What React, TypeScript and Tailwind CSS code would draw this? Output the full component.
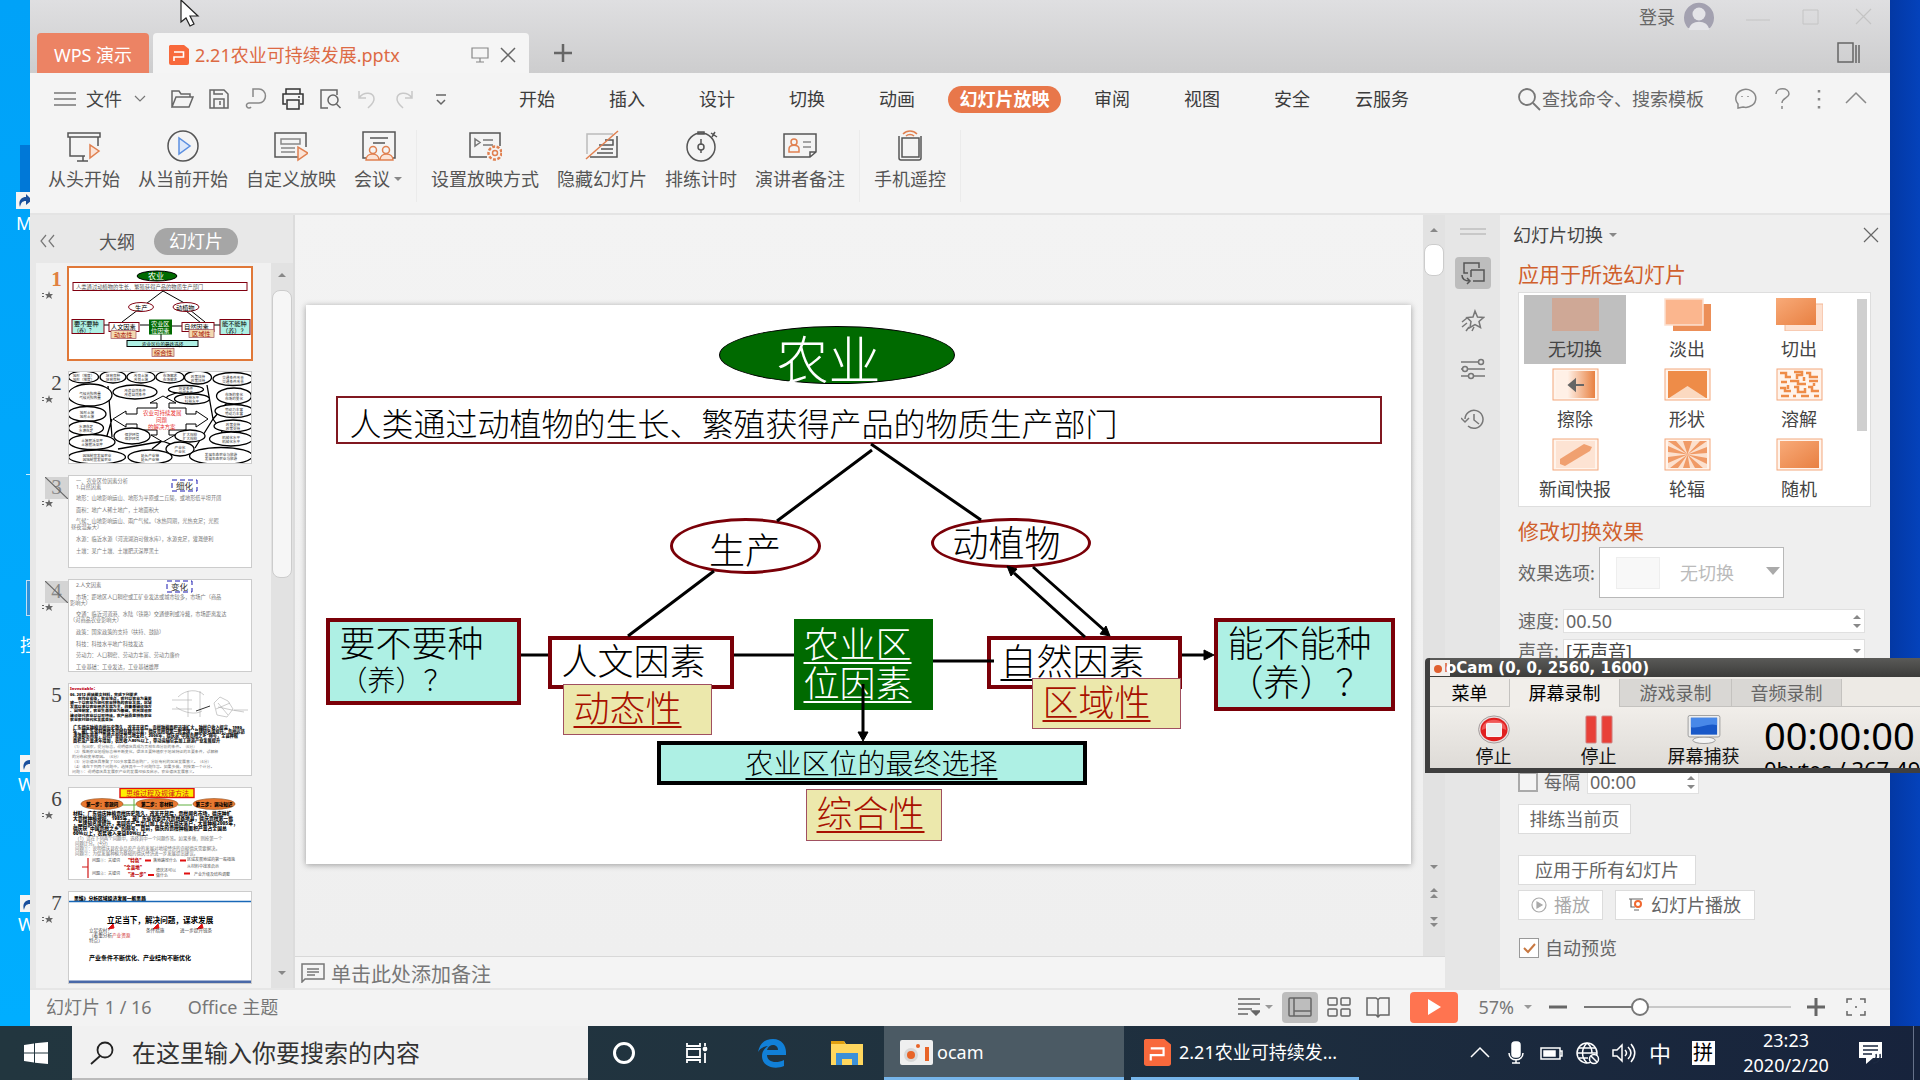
import { ReactNode, useState } from 'react';
import clsx from 'clsx';

// ---------- icons ----------

type IconProps = { w?: number; h?: number; sw?: number; className?: string; children: ReactNode };

const Icon = ({ w = 24, h = 24, sw = 1.5, className, children }: IconProps) => (
  <svg width={w} height={h} viewBox={`0 0 ${w} ${h}`} fill="none" stroke="currentColor" strokeWidth={sw} className={clsx('shrink-0', className)}>
    {children}
  </svg>
);

const Caret = ({ up, className }: { up?: boolean; className?: string }) => (
  <svg width="10" height="6" viewBox="0 0 10 6" className={clsx('shrink-0', className)}>
    <path d={up ? 'M1 5h8L5 1z' : 'M1 1h8L5 5z'} fill="currentColor" />
  </svg>
);

const WpsLogo = ({ w, h }: { w: number; h: number }) => (
  <svg width={w} height={h} viewBox="0 0 20 20" preserveAspectRatio="none" className="shrink-0">
    <path d="M1 0h14l5 4v14a2 2 0 0 1-2 2H2a2 2 0 0 1-2-2V1z" fill="#f8693c" />
    <path d="M5 7h9.500v5H5v4" fill="none" stroke="#fff" strokeWidth="1.6" />
  </svg>
);

const quickIcons = [
  {
    label: '打开',
    tone: 'text-[#666]',
    art: <path d="M2 20V4h7l2 3h9v3M2 20 6 10h17l-4 10z" />,
  },
  {
    label: '保存',
    tone: 'text-[#666]',
    art: (
      <>
        <path d="M3 3h14l4 4v14H3z" />
        <path d="M7 3v4h9M7 21V12h10v9M13 14v4" />
      </>
    ),
  },
  {
    label: '输出为PDF',
    tone: 'text-[#888]',
    art: <path d="M9 10V2h6a6 6.500 0 0 1 0 14H5a2.500 2.500 0 1 0 2 4" />,
  },
  {
    label: '打印',
    tone: 'text-[#333]',
    art: (
      <>
        <path d="M5 7V2h14v5M5 17H2V7h20v10h-3" />
        <path d="M6 13h12v9H6zM17 10h2" />
      </>
    ),
  },
  {
    label: '打印预览',
    tone: 'text-[#666]',
    art: (
      <>
        <path d="M10 21H3V3h16v5" />
        <circle cx="15" cy="13" r="5" />
        <path d="m18.500 17 4 4" />
      </>
    ),
  },
  { label: '撤销', tone: 'text-[#c8c8c8]', art: <path d="M4 4v7h7M4 11c5-7 15-6 15 1 0 4-3 6-6 9" /> },
  { label: '恢复', tone: 'text-[#c8c8c8]', art: <path d="M20 4v7h-7M20 11C15 4 5 5 5 12c0 4 3 6 6 9" /> },
  { label: '自定义快速访问工具栏', tone: 'text-[#666]', art: <path d="M7 8h10M8 13l4 4 4-4" /> },
];

const OR = '#e08050';

const ribbonGroups = [
  [
    {
      label: '从头开始',
      art: (
        <>
          <path d="M1 3h32v4H1zM3 7v19h15M16 26v5M10 31h11M31 7v9" />
          <path d="M23 15v13l9-7z" stroke={OR} fill="#fbe3d6" />
        </>
      ),
    },
    {
      label: '从当前开始',
      art: (
        <>
          <circle cx="17" cy="16" r="15" />
          <path d="M13 8v16l11-8z" stroke="#5b8fe0" fill="#dce8fa" />
        </>
      ),
    },
    {
      label: '自定义放映',
      art: (
        <>
          <path d="M24 27H1V3h31v14" />
          <path d="M7 9h19v5H7zM7 18h14M7 22h14" stroke="#888" />
          <path d="M24 17v13l10-7z" stroke={OR} fill="#fbe3d6" />
        </>
      ),
    },
    {
      label: '会议',
      menu: true,
      art: (
        <>
          <path d="M5 28H1V2h32v26h-4M8 8h18M11 13h12" />
          <circle cx="11" cy="20" r="3.500" stroke={OR} />
          <circle cx="24" cy="20" r="3.500" stroke={OR} />
          <path d="M4 30c0-8 13-8 13 0zM18 30c0-8 13-8 13 0z" stroke={OR} fill="#fbe3d6" />
        </>
      ),
    },
  ],
  [
    {
      label: '设置放映方式',
      art: (
        <>
          <path d="M19 27H2V3h30v13" />
          <path d="M7 9v7l5-3.500zM15 10h10M15 15h10" stroke="#777" />
          <circle cx="27" cy="23" r="6.500" stroke={OR} strokeWidth="2.500" strokeDasharray="3 1.500" />
          <circle cx="27" cy="23" r="2.500" stroke={OR} />
        </>
      ),
    },
    {
      label: '隐藏幻灯片',
      art: (
        <>
          <path d="M2 24V4h26" stroke="#bbb" />
          <path d="M32 6v21H5M14 15h14v-5h-8M16 19h12M12 23h16" />
          <path d="M1 29 33 1" stroke={OR} />
        </>
      ),
    },
    {
      label: '排练计时',
      art: (
        <>
          <circle cx="17" cy="17" r="14" />
          <path d="M14 2h6v2h-6zM17 9v6M27 3l6 4M31 2l-3 5" />
          <circle cx="17" cy="17" r="3" />
          <path d="M17 20v3" />
        </>
      ),
    },
    {
      label: '演讲者备注',
      art: (
        <>
          <path d="M27 27H1V4h32v18zM27 27v-5h6" />
          <circle cx="11" cy="12" r="3" stroke={OR} />
          <path d="M6 22v-3c0-5 10-5 10 0v3z" stroke={OR} />
          <path d="M20 12h8M20 17h8" stroke="#888" />
        </>
      ),
    },
  ],
  [
    {
      label: '手机遥控',
      art: (
        <>
          <path d="M6 6v22a2 2 0 0 0 2 2h18a2 2 0 0 0 2-2V6" />
          <path d="M9 8h17v19H9z" />
          <path d="M10 4c4-4 10-4 14 0M13 6c2-2 6-2 8 0" stroke={OR} />
        </>
      ),
    },
  ],
];

const menuTabs = ['开始', '插入', '设计', '切换', '动画', '幻灯片放映', '审阅', '视图', '安全', '云服务'];

// ---------- title bar ----------

const TitleBar = () => (
  <header className="bg-linear-to-b from-[#dfdfe1] to-[#cdcdce] text-[#666]">
    <div className="flex h-[33px] items-center justify-end pr-4">
      <button className="mr-[9px] text-[18px] leading-6">登录</button>
      <svg width="30" height="30" viewBox="0 0 30 30" className="mr-8">
        <path d="M4 26a15 15 0 1 1 22 0z" fill="#a3a1b0" />
        <circle cx="15" cy="12" r="6.500" fill="#e4e4e8" />
        <path d="M5 28c0-11 20-11 20 0z" fill="#e4e4e8" />
      </svg>
      <div className="flex items-center gap-8 text-[#c4c4c4]">
        <button aria-label="最小化"><Icon w={24} h={20} sw={1}><path d="M0 13h24" /></Icon></button>
        <button aria-label="最大化"><Icon w={20} h={20} sw={1}><path d="M1 3h15v14H1z" /></Icon></button>
        <button aria-label="关闭"><Icon w={20} h={20} sw={1.2}><path d="m2 2 15 15M17 2 2 17" /></Icon></button>
      </div>
    </div>
    <div className="flex h-10 items-stretch pl-[7px]">
      <button className="w-28 rounded-t bg-[#ec8364] pt-1 text-[18px] text-white">WPS 演示</button>
      <div className="ml-1 flex w-[376px] items-center rounded-t bg-[#f5f5f5] pl-4 pr-3 pt-1">
        <WpsLogo w={20} h={20} />
        <span className="ml-[6px] text-[18px] text-[#dd6a44]">2.21农业可持续发展.pptx</span>
        <button className="ml-auto" aria-label="放映窗口">
          <Icon w={18} h={18} sw={1.2} className="text-[#888]"><path d="M1 2h16v10H1zM9 12v4M5 16h8" /></Icon>
        </button>
        <button className="ml-[10px]" aria-label="关闭标签">
          <Icon w={18} h={18}><path d="m2 2 14 14M16 2 2 16" /></Icon>
        </button>
      </div>
      <button className="ml-[24px]" aria-label="新建">
        <Icon w={20} h={20} sw={2.5}><path d="M10 1v18M1 10h18" /></Icon>
      </button>
      <button className="ml-auto mr-[29px]" aria-label="标签列表">
        <Icon w={25} h={22}><path d="M2 1h15v19H2zM20 3v18M23 3v18" /></Icon>
      </button>
    </div>
  </header>
);

// ---------- ribbon ----------

const Ribbon = () => {
  const [active, setActive] = useState('幻灯片放映');
  return (
    <div className="border-b-2 border-[#e4e4e4] bg-[#f4f4f4] text-[18px] text-[#444]">
      <div className="flex h-[52px] items-center pl-6 pr-4">
        <button className="flex items-center">
          <Icon w={22} h={16} className="text-[#777]"><path d="M0 2h22M0 8h22M0 14h22" /></Icon>
          <span className="ml-[10px]">文件</span>
          <Icon w={12} h={8} sw={1.2} className="ml-[12px] text-[#777]"><path d="m1 1 5 5 5-5" /></Icon>
        </button>
        <div className="ml-[17px] flex">
          {quickIcons.map((q) => (
            <button key={q.label} aria-label={q.label} className={clsx('flex w-[37px] justify-center', q.tone)}>
              <Icon>{q.art}</Icon>
            </button>
          ))}
        </div>
        <nav className="ml-[33px] flex items-center">
          {menuTabs.map((t) => (
            <button
              key={t}
              onClick={() => setActive(t)}
              className={t === active ? 'mx-[6px] h-[27px] w-[113px] rounded-full bg-[#e8774a] font-bold leading-6 text-white' : 'w-[90px] text-[#3c3c3c]'}
            >
              {t}
            </button>
          ))}
        </nav>
        <label className="ml-auto mr-3 flex items-center text-[#777]">
          <Icon w={25} h={24} sw={1.8}><circle cx="10" cy="10" r="8" /><path d="m16 16 7 7" /></Icon>
          <input aria-label="搜索" placeholder="查找命令、搜索模板" className="w-[172px] bg-transparent outline-none placeholder:text-[#666]" />
        </label>
        <div className="flex text-[#888]">
          <button aria-label="反馈" className="flex w-[37px] justify-center">
            <Icon><path d="M5 21v-4a10 9 0 1 1 5 3zM9 9v1M15 9v1" /></Icon>
          </button>
          <button aria-label="帮助" className="flex w-[37px] justify-center">
            <Icon><path d="M6 7c0-7 13-7 13 0 0 4-7 4-7 9M12 19v3" /></Icon>
          </button>
          <button aria-label="更多" className="flex w-[37px] justify-center">
            <Icon sw={2.5}><path d="M12 3v2.500M12 11v2.500M12 19v2.500" /></Icon>
          </button>
          <button aria-label="折叠功能区" className="flex w-[37px] justify-center">
            <Icon><path d="m2 16 10-10 10 10" /></Icon>
          </button>
        </div>
      </div>
      <div className="flex h-[88px] items-start pl-[9px] pt-[5px]">
        {ribbonGroups.map((group, i) => (
          <div key={i} className={clsx('flex h-[72px] border-r border-[#ebebeb]', i === 0 ? 'pr-1' : 'px-[5px]')}>
            {group.map((b) => (
              <button key={b.label} className="flex flex-col items-center px-[9px] text-[#555]">
                <Icon w={34} h={34}>{b.art}</Icon>
                <span className="flex items-center leading-[30px]">
                  {b.label}
                  {'menu' in b && <Caret className="ml-[3px] text-[#888]" />}
                </span>
              </button>
            ))}
          </div>
        ))}
      </div>
    </div>
  );
};

// ---------- thumbnails ----------

const Lines = ({ x, y, step, size = 5.2, fill = '#777', bold, rows }: { x: number; y: number; step: number; size?: number; fill?: string; bold?: boolean; rows: string[] }) => (
  <g fontSize={size} fill={fill} fontWeight={bold ? 900 : 400}>
    {rows.map((r, i) => (
      <text key={i} x={x} y={y + i * step}>{r}</text>
    ))}
  </g>
);

const ThumbOne = () => (
  <g fontSize="6.200" fill="#000">
    <ellipse cx="89" cy="9" rx="20" ry="5" fill="#006a00" stroke="#000" />
    <text x="80" y="12" fill="#fff" fontSize="8">农业</text>
    <rect x="5" y="15.500" width="174" height="8" fill="#fff" stroke="#800010" />
    <text x="8" y="21.500" fontSize="5.300" fill="#555">人类通过动植物的生长、繁殖获得产品的物质生产部门</text>
    <path d="M54 55 95 24l25 14M118 44l15 12M122 43l15 12M36 58h6M72 58h9M104 59h10M146 58h6M93 66v7" stroke="#000" fill="none" />
    <ellipse cx="73" cy="40" rx="12.500" ry="4.500" fill="#fff" stroke="#800010" />
    <text x="67" y="42.500">生产</text>
    <ellipse cx="118" cy="40" rx="13" ry="4.500" fill="#fff" stroke="#800010" />
    <text x="108" y="42.500">动植物</text>
    <rect x="4" y="52.500" width="32" height="14" fill="#aef0e4" stroke="#800010" />
    <text x="6" y="58.500">要不要种</text>
    <text x="6" y="64.500" fontSize="5">（养）？</text>
    <rect x="41" y="55.500" width="30" height="9" fill="#fff" stroke="#800010" />
    <text x="43" y="62">人文因素</text>
    <rect x="81" y="52.500" width="23" height="15" fill="#006a00" />
    <text x="83" y="58.500" fill="#fff">农业区</text>
    <text x="83" y="65.500" fill="#fff">位因素</text>
    <rect x="114" y="55.500" width="32" height="9" fill="#fff" stroke="#800010" />
    <text x="116" y="62">自然因素</text>
    <rect x="152" y="52.500" width="30" height="15" fill="#aef0e4" stroke="#800010" />
    <text x="154" y="58.500">能不能种</text>
    <text x="154" y="65.500">（养）？</text>
    <g fill="#f3d9b0" stroke="#a05060" strokeWidth=".7">
      <rect x="43" y="63.500" width="25" height="8" />
      <rect x="121" y="62.500" width="25" height="8" />
      <rect x="84" y="81.500" width="22" height="8" />
    </g>
    <g fill="#a81000">
      <text x="46" y="70">动态性</text>
      <text x="124" y="69">区域性</text>
      <text x="86" y="88">综合性</text>
    </g>
    <rect x="59" y="73.500" width="71" height="6" fill="#aef0e4" stroke="#000" />
    <text x="74" y="78.500" fontSize="4.600">农业区位的最终选择</text>
  </g>
);

const bubbles: [number, number, number, number, string][] = [
  [15.5, 6, 15, 6, '地形（坡度）'], [45, 6, 13, 6, '培育良种'], [73, 6, 14, 6, '改良土壤'], [102, 6, 14, 6, '市场需求'],
  [130, 6.5, 13.5, 6.5, '政策扶持'], [165, 8, 20, 6.5, '交通条件改善'], [67, 21, 22, 7, '改造自然条件'], [22, 24, 22, 11, '气候光照热量'],
  [118, 18.5, 17.5, 4, '历史条件'], [124, 28, 17.5, 5, '科技水平'], [166, 25, 17.5, 8, '市场的变化'], [19, 43, 19, 7.5, '地形土壤'],
  [166, 40, 19, 6.5, '劳动力丰富'], [18, 57, 17.5, 7, '水源充足'], [165, 55, 19, 6, '政策支持'], [24, 71, 23, 7.5, '土壤肥沃深厚'],
  [163, 68, 21.5, 7, '机械化水平'], [64, 65, 18, 8, '保护环境'], [122, 65, 15, 6, '扩大规模'], [112, 78, 14, 7, '产业化'],
  [29, 86, 28.5, 7, '因地制宜发展农业'], [82, 86, 22, 7, '延长产业链'], [153, 85, 31.5, 8.5, '发展生态农业与旅游'],
];

const ThumbTwo = () => (
  <g>
    <path d="M40 15 44 66M44 48l-6 20M50 78 96 70M84 78l10-8 14 5M145 48l-6-34M145 48l20-23M145 48l14 20M145 48l-18 29M92 33l8-8 16-6" stroke="#000" strokeWidth="1.300" fill="none" />
    <path d="M69 37h20v-5h-7l13-7 13 7h-7v5h17v6h10v-3l12 8-12 8v-3h-10v6h-17v5h6l-12 7-12-7h6v-5H69v-6H58v3l-13-8 13-8v3h11z" fill="#fff" stroke="#000" />
    <text x="75" y="44" fontSize="5.500" fill="#e83030">农业可持续发展</text>
    <text x="88" y="51" fontSize="5.500" fill="#e83030">问题</text>
    <text x="80" y="58" fontSize="5.500" fill="#e83030">的解决方案</text>
    {bubbles.map(([cx, cy, rx, ry, t]) => (
      <g key={t}>
        <ellipse cx={cx} cy={cy} rx={rx} ry={ry} fill="#fff" stroke="#000" strokeWidth="1.300" />
        <text x={cx} y={cy} textAnchor="middle" fontSize="3.600" fill="#333">{t}</text>
        <text x={cx} y={cy + 4} textAnchor="middle" fontSize="3.600" fill="#333">{t}</text>
      </g>
    ))}
  </g>
);

const ThumbThree = () => (
  <g>
    <Lines x={8} y={8} step={5.5} rows={['一、农业区位因素分析', '1.自然因素']} />
    <rect x="104" y="5" width="25" height="11" fill="#fff" stroke="#1818b0" strokeDasharray="5 3" />
    <text x="108" y="14" fontSize="8.500" fill="#333">细化</text>
    <Lines x={8} y={25} step={11.5} rows={['地形：山地影响运山、地形为平原或二丘陵，或地形低平坦开阔', '面积：地广人稀土地广，土地面积大', '气候：山地影响运山、雨广气候。（水热同期，光热充足；光照']} />
    <Lines x={3} y={54} step={6} rows={['昼夜温差大）']} />
    <Lines x={8} y={66} step={11.5} rows={['水源：临近水源（河流湖泊可做水库），水源充足，灌溉便利', '土壤：某广土壤、土壤肥沃深厚黑土']} />
  </g>
);

const ThumbFour = () => (
  <g>
    <Lines x={8} y={8} step={6} rows={['2.人文因素']} />
    <rect x="99" y="2" width="25" height="11" fill="#fff" stroke="#1818b0" strokeDasharray="5 3" />
    <text x="103" y="11" fontSize="8.500" fill="#333">变化</text>
    <Lines x={8} y={20} step={17} rows={['市场：距地区人口稠密或工矿业发达或城市较多，市场广（商品', '交通：临近河道港、水陆（铁路）交通便利或冷藏，市场距离发达']} />
    <Lines x={2} y={26} step={17} rows={['影响大）', '（对商品农业影响大）']} />
    <Lines x={8} y={55} step={11.5} rows={['政策：国家政策的支持（扶持、鼓励）', '科技：科技水平地广科技发达', '劳动力：人口稠密、劳动力丰富、劳动力廉价', '工业基础：工业发达，工业基础雄厚']} />
  </g>
);

const ThumbFive = () => (
  <g>
    <text x="2" y="6.500" fontSize="4" fontWeight="900" fill="#c00020">Investiable：</text>
    <Lines x={2} y={12.5} step={4.2} size={3.9} bold fill="#111" rows={['06. 2012 阅读图文材料，完成下列要求', '　　农作业省级，农业地点，农村以农业为重要', '被一个以农业为现代农业特色的农业发展，区域', '发展以来以农业经济发展为主，改善基础设施方', '、因地制宜，农业生态农业为基础，农民增收农', '建设现代农业以以可持续，农产品质量特色农业', '农业农村现代化发展目标']} />
    <path d="M104 17h20M120 8v26M132 8v26M110 14c8-8 20-8 26-2M108 24c8 6 20 8 26 4M104 26h20M146 20l6-6 8 4 5 8-6 8-10-2zM148 26l14-6M150 20l10 12M150 24l14 3 12 2M166 27h14" stroke="#aaa" fill="none" strokeWidth=".6" />
    <path d="m128 28 14-5" stroke="#333" fill="none" />
    <Lines x={5} y={46} step={4.2} size={4.2} bold fill="#111" rows={['广东德庆种植贡柑历史悠久，改革开放后，贡柑种植面积迅速扩大，种柑户收入提高，1980', '年，被广东省科委授予贡柑良种示范县，德庆贡柑获第一批金牌，品牌知名度提升，贡柑远销', '港澳和东南亚，贡柑产业成为当地支柱，2006年，德庆获"中国贡柑之乡"称号，全县种植', '面积及产量逐年增加，农民收入80%以上，带动运输包装加工旅游产业发展提升']} />
    <Lines x={4} y={65} step={5} size={3.9} rows={['（1）指出农，提分标志，说明德庆县成为贡柑生态分析的条件。（6分）', '（2）推断农业地理标志带不断变化，促进主要种植农于地域特征的主要条件，试解释', '的分布和变革原因。（6分）', '（3）分析德庆县集聚了100多家果品收购厂，分析有利的区域发展意义。（6分）', '（4）请在下列两个问题中，选择其中一个问题作答。如果多做，则按第一个计分。', '问题①：说明德庆县发展农产业的发展经验及启示，农业德庆发展意义。']} />
  </g>
);

const ThumbSix = () => (
  <g>
    <rect x="52" y="1.500" width="74" height="9" fill="#ffee00" stroke="#e01010" strokeWidth="1.400" />
    <text x="58" y="8.500" fontSize="7" fill="#d02020">思维过程及规律方法</text>
    <path d="M54 18h14M110 18h14M66 12v12" stroke="#60b040" />
    {([[34, '第一步：审题问'], [89, '第二步：审材料'], [146, '第三步：调动知识']] as [number, string][]).map(([cx, t]) => (
      <g key={t}>
        <ellipse cx={cx} cy="17" rx="21" ry="5.500" fill="#e87830" stroke="#905020" strokeWidth=".6" />
        <text x={cx} y="18.500" textAnchor="middle" fontSize="4.600" fontWeight="900">{t}</text>
      </g>
    ))}
    <Lines x={5} y={28} step={5} size={4.8} bold fill="#111" rows={['材料：广东德庆种植贡柑历史悠久，改革开放后，贡柑闻名市场，德庆种扩', '大贡柑种植规模。1985年，被广东省农委评为贡柑基地县，德庆贡柑第一批', '，品牌知名度提升，果园农产品出口加工企业在德庆落户，大量种植2005年，', '德庆获"中国贡柑之乡"的称号，目前，德庆的贡柑种植面积产量占全国总', '60%以上，农民收入来自80%以上。']} />
    <Lines x={7} y={53} step={5} size={4.4} rows={['（1）请在下列两个问题中，选择其中一个问题作答。如果多做，则按第一个', '问题计分。（4分）', '问题①：说明德庆县农业品农产业的发展对地域经济的贡献德庆需要解决。', '问题②：为促发展种植为基础的德庆经济进一步发展提出建议。']} />
    <path d="M14 80h6M20 71v20" stroke="#d01818" strokeWidth="1.200" />
    <path d="M77 73.500h6M112 73.500h6M80 88h6M116 86.500h6" stroke="#e01010" strokeWidth="2.200" />
    <g fontSize="4" fill="#555">
      <text x="24" y="75">问题①：关键词</text>
      <text x="85" y="75">落地路径什么</text>
      <text x="119" y="74">区域发展地域的第一般措施</text>
      <text x="24" y="88">问题②：关键词</text>
      <text x="88" y="85">德庆还可以</text>
      <text x="88" y="90">做什么</text>
      <text x="119" y="81">从材料中找准启示</text>
      <text x="126" y="88.500">产业升级及结构调整</text>
    </g>
    <g fontSize="4.500" fontWeight="900" fill="#c01010">
      <text x="60" y="75">"特色"</text>
      <text x="56" y="82">"全县地"</text>
      <text x="60" y="89">"进一步"</text>
    </g>
  </g>
);

const ThumbSeven = () => (
  <g>
    <text x="6" y="8.500" fontSize="4.800" fontWeight="900">思维》分析区域经济发展一般思路</text>
    <path d="M0 10.500h184" stroke="#1868b8" strokeWidth="1.500" />
    <text x="39" y="32" fontSize="7.600" fontWeight="700">立足当下，解决问题，谋求发展</text>
    <path d="m40 38 5-5 1 4zM85 38l5-5 1 4zM129 38l5-5 1 4z" fill="#e01010" stroke="#e01010" />
    <Lines x={21} y={41} step={5.2} size={4.6} fill="#444" rows={['立足农村？', '（着重分析', '特点）']} />
    <text x="44" y="46.200" fontSize="4.600" fill="#d03030">产业资源</text>
    <text x="78" y="41" fontSize="4.600" fill="#444">条件措施</text>
    <text x="112" y="41" fontSize="4.600" fill="#444">进一步提升链条</text>
    <text x="21" y="69" fontSize="6" fontWeight="700">产业条件不断优化、产业结构不断优化</text>
    <path d="M0 91.500h184" stroke="#4868a8" strokeWidth="4" />
  </g>
);

const thumbs = [
  { n: 1, star: true, art: <ThumbOne /> },
  { n: 2, star: true, art: <ThumbTwo /> },
  { n: 3, star: true, hidden: true, art: <ThumbThree /> },
  { n: 4, star: true, hidden: true, art: <ThumbFour /> },
  { n: 5, star: false, art: <ThumbFive /> },
  { n: 6, star: true, art: <ThumbSix /> },
  { n: 7, star: true, art: <ThumbSeven /> },
];

const SlidePanel = () => (
  <aside className="flex w-[265px] shrink-0 flex-col border-r-2 border-[#dcdcdc] bg-[#e8e8e8]">
    <div className="flex h-12 shrink-0 items-center pl-[9px] pt-1 text-[18px] text-[#555]">
      <button aria-label="收起"><Icon w={17} h={14} sw={1.2} className="text-[#777]"><path d="M7 1 2 7l5 6M15 1l-5 6 5 6" /></Icon></button>
      <button className="ml-[43px] pt-[2px] leading-6">大纲</button>
      <button className="ml-[19px] h-[27px] w-[84px] rounded-full bg-[#a6a6a6] leading-[26px] text-white">幻灯片</button>
    </div>
    <div className="flex min-h-0 flex-1">
      <ol className="ml-[6px] flex-1 overflow-hidden bg-[#f1f1f1] pt-1">
        {thumbs.map((t) => (
          <li key={t.n} className="mb-[11px] flex h-[93px]">
            <div className="flex w-8 flex-col items-end pt-[2px]">
              <span
                className={clsx(
                  'relative flex h-[22px] w-[23px] items-center justify-center font-["Liberation_Serif"] text-[21px]',
                  t.n === 1 ? 'font-bold text-[#e08040]' : 'text-[#444]',
                  t.hidden && 'bg-[#d4d4d4] text-[#888]',
                )}
              >
                {t.n}
                {t.hidden && <Icon w={23} h={22} sw={1.2} className="absolute left-0 top-0 text-[#666]"><path d="m0 0 23 22" /></Icon>}
              </span>
              {t.star && (
                <svg width="12" height="8" viewBox="0 0 12 8" className="mr-[14px]">
                  <path d="m7 0 1 3h3L9 5l1 3-3-2-3 2 1-3-2-2h3zM0 2h2v1H0zM0 5h2v1H0z" fill="#666" />
                </svg>
              )}
            </div>
            <svg
              viewBox="0 0 184 93"
              className={clsx('h-[93px] w-[184px] bg-white outline -outline-offset-1', t.n === 1 ? 'outline-2 outline-[#e07838]' : 'outline-1 outline-[#ccc]')}
            >
              {t.art}
            </svg>
          </li>
        ))}
      </ol>
      <div className="flex w-[22px] flex-col items-center bg-[#e2e2e2] pb-3 pt-[9px] text-[#888]">
        <Caret up />
        <div className="mt-3 h-[288px] w-5 rounded-lg border border-[#ccc] bg-[#f6f6f6]" />
        <Caret className="mt-auto" />
      </div>
    </div>
  </aside>
);

// ---------- slide canvas ----------

const Slide = () => (
  <div className='relative h-[559px] w-[1105px] shrink-0 bg-white font-["Noto_Sans_CJK_SC",sans-serif] text-[36px] font-light leading-[39px] text-black shadow-[0_1px_6px_rgba(0,0,0,0.35)] [text-spacing-trim:space-all]'>
    <div className="absolute left-[413px] top-[21px] flex h-[58px] w-[236px] items-center justify-center rounded-[50%] border border-black bg-[#006a00] pr-4 pt-1 text-[52px] text-white">
      农业
    </div>
    <div className="absolute left-[30px] top-[91px] flex h-12 w-[1046px] items-center border-2 border-[#801820] pl-3 pt-1 text-[32px]">
      人类通过动植物的生长、繁殖获得产品的物质生产部门
    </div>
    <div className="absolute left-[364px] top-[213px] flex h-14 w-[151px] items-center justify-center rounded-[50%] border-[3px] border-[#7a0008] pt-1">生产</div>
    <div className="absolute left-[625px] top-[213px] flex h-[50px] w-[160px] items-center justify-center rounded-[50%] border-[3px] border-[#7a0008] pb-1 pr-2">动植物</div>

    <div className="absolute left-[20px] top-[313px] h-[87px] w-[195px] border-4 border-[#7a0008] bg-[#aef0e4] pl-[10px]">
      <p>要不要种</p>
      <p className="text-[28px] leading-9">（养）？</p>
    </div>
    <div className="absolute left-[242px] top-[331px] h-[53px] w-[186px] border-4 border-[#7a0008] bg-white pl-[10px]">人文因素</div>
    <div className="absolute left-[488px] top-[314px] h-[91px] w-[139px] bg-[#006a00] pl-[10px] pt-1 text-white underline decoration-2 underline-offset-4">
      农业区
      <br />
      位因素
    </div>
    <div className="absolute left-[681px] top-[331px] h-[53px] w-[195px] border-4 border-[#7a0008] bg-white pl-[10px] underline decoration-2 underline-offset-4">自然因素</div>
    <div className="absolute left-[908px] top-[313px] h-[93px] w-[181px] border-4 border-[#7a0008] bg-[#aef0e4] pl-[10px]">
      <p>能不能种</p>
      <p>（养）？</p>
    </div>
    <div className="absolute left-[257px] top-[379px] h-[51px] w-[149px] border border-[#a05060] bg-[#ece8ac] pl-[10px] pt-[2px] text-[#a81000] underline decoration-2 underline-offset-4">动态性</div>
    <div className="absolute left-[726px] top-[373px] h-[51px] w-[149px] border border-[#a05060] bg-[#ece8ac] pl-[10px] pt-[2px] text-[#a81000] underline decoration-2 underline-offset-4">区域性</div>
    <div className="absolute left-[351px] top-[436px] flex h-11 w-[430px] items-center justify-center border-4 border-black bg-[#aef0e4] pb-[2px] text-[28px] underline decoration-2 underline-offset-4">
      农业区位的最终选择
    </div>
    <div className="absolute left-[500px] top-[484px] h-[52px] w-[136px] border border-[#a05060] bg-[#ece8ac] pl-[10px] pt-[2px] text-[#a81000] underline decoration-2 underline-offset-4">综合性</div>

    {/* connectors */}
    <svg viewBox="0 0 1105 559" className="absolute inset-0" fill="none" stroke="#000" strokeWidth="3">
      <path d="M566 145 471 216M565 139 675 215M408 266 322 331M215 350h27M428 350h60M627 356h61M876 350h24M557 379v50M779 332 708 268M727 262 798 325" />
      <path d="m908 350-10-5v10zM557 436l-5-9h10zM701 261l10 3-6 7zM804 331l-10-2 6-8z" fill="#000" strokeWidth="1" />
    </svg>
  </div>
);

const Editor = () => (
  <main className="flex min-w-0 flex-1 flex-col">
    <div className="flex min-h-0 flex-1">
      <div className="flex min-w-0 flex-1 items-start justify-center overflow-hidden bg-linear-to-b from-[#f3f3f3] to-[#efefef] pr-[2px] pt-[90px]">
        <Slide />
      </div>
      <div className="flex w-[22px] flex-col items-center gap-[17px] bg-[#e2e2e2] pb-[28px] pt-3 text-[#888]">
        <Caret up />
        <div className="-mt-[6px] h-8 w-5 rounded-lg border border-[#ccc] bg-white" />
        <Caret className="mt-auto" />
        <span><Caret up /><Caret up /></span>
        <span><Caret /><Caret /></span>
      </div>
    </div>
    <label className="flex h-8 items-center border-t border-[#d8d8d8] bg-[#f4f4f4] pl-[6px] text-[20px] text-[#777]">
      <Icon w={24} h={20}><path d="M1 19V1h22v15H4zM6 6h12M6 9h12M6 12h8" /></Icon>
      <input aria-label="备注" placeholder="单击此处添加备注" className="ml-[6px] flex-1 bg-transparent pt-1 outline-none placeholder:text-[#777]" />
    </label>
  </main>
);

// ---------- task pane ----------

const ToolStrip = () => (
  <div className="flex w-[55px] shrink-0 flex-col items-center bg-[#e6e6e6] pt-[13px] text-[#777]">
    <Icon w={26} h={8} sw={1} className="text-[#aaa]"><path d="M0 1h26M0 6h26" /></Icon>
    <button aria-label="幻灯片切换" className="mt-[21px] flex h-8 w-9 items-center justify-center rounded bg-[#bdbdbd] text-[#555]">
      <Icon><path d="M7 12H3V2h15v5" /><path d="M10 9h13v11H12M10 9v7M1 14c0 4 3 6 8 6M6 17l3 3-3 3" /></Icon>
    </button>
    <button aria-label="自定义动画" className="mt-5"><Icon><path d="m14 2 2.500 6 6 .500-4.500 4 1.500 6-5.500-3-5 3 1-6L6 8.500l6-.500zM1 13l5-4M1 18l5-4M5 22l3-4M11 22l2-4" /></Icon></button>
    <button aria-label="对象属性" className="mt-6"><Icon><path d="M0 5h18M6 12h18M0 12h2M0 19h8M13 19h11" /><circle cx="20" cy="5" r="2.500" /><circle cx="4" cy="12" r="2.500" /><circle cx="10" cy="19" r="2.500" /></Icon></button>
    <button aria-label="备份中心" className="mt-[26px]"><Icon><path d="M4 12a9 9 0 1 1 3 7M0 11l4 4 4-4M13 7v6l5 4" /></Icon></button>
  </div>
);

const Frame = ({ children }: { children?: ReactNode }) => (
  <>
    <rect x="1" y="1" width="45" height="31" fill="#fff4ec" stroke="#f3a77c" />
    {children}
  </>
);

const effects = [
  { label: '无切换', art: <rect width="47" height="33" fill="#cfa896" /> },
  { label: '淡出', art: <><rect x="9" y="6" width="38" height="27" fill="#ec8f58" /><rect x="1" y="1" width="38" height="26" fill="#fbb68e" stroke="#fbe0d0" strokeWidth="1.500" /></> },
  { label: '切出', art: <><rect x="9" y="6" width="38" height="27" fill="#fde0cf" stroke="#f3b796" /><rect width="40" height="27" fill="url(#orange)" /></> },
  {
    label: '擦除',
    art: <Frame><rect x="4" y="3" width="39" height="27" fill="url(#wipe)" /><path d="M32 17H18M23 12l-6 5 6 5z" stroke="#666" strokeWidth="2" fill="#666" /></Frame>,
  },
  { label: '形状', art: <Frame><rect x="4" y="3" width="39" height="27" fill="#ee8c48" /><path d="M5 30 23.500 18 42 30z" fill="#fbd9c0" /></Frame> },
  {
    label: '溶解',
    art: (
      <Frame>
        <path d="M4 5h6v4h5M18 4h8v3h-5v4M30 5h4v4h8M5 14h6M14 13h8v3h8M33 13h9M4 20h5v3h6M18 19h4v5h7v-4M32 19h4v4h7M5 28h8M17 28h3M25 28h8M38 28h5M12 17v4M28 9v4M38 15v3" stroke="#ee8c48" strokeWidth="2.500" fill="none" />
      </Frame>
    ),
  },
  { label: '新闻快报', art: <Frame><rect x="4" y="3" width="39" height="27" fill="#fde3d3" /><path d="m8 21 24-15 8 3-2 4-25 15-5-2z" fill="#f0a070" /></Frame> },
  {
    label: '轮辐',
    art: <Frame><rect x="4" y="3" width="39" height="27" fill="#fce0ce" /><path d="M23.500 16.500 4 3h8zM23.500 16.500 19 3h9zM23.500 16.500 36 3h7zM23.500 16.500 43 9v6zM23.500 16.500 43 20v6zM23.500 16.500 39 30h-8zM23.500 16.500 26 30h-7zM23.500 16.500 14 30H6zM23.500 16.500 4 25v-6zM23.500 16.500 4 14V8z" fill="#f09a66" /></Frame>,
  },
  { label: '随机', art: <Frame><rect x="4" y="3" width="39" height="27" fill="url(#orange)" /></Frame> },
];

const Spinner = () => (
  <span className="flex flex-col gap-[3px] pr-[2px] text-[#888]">
    <button aria-label="增加"><Caret up className="block" /></button>
    <button aria-label="减少"><Caret className="block" /></button>
  </span>
);

const paneButton = 'flex h-[30px] items-center justify-center border border-[#dcdcdc] bg-white text-[#666]';

const TransitionPane = () => {
  const [selected, setSelected] = useState('无切换');
  const [preview, setPreview] = useState(true);
  return (
    <aside className="flex w-[390px] shrink-0 flex-col bg-[#efefef] pl-[18px] pr-[19px] text-[18px] leading-6 text-[#666]">
      <div className="-ml-[5px] flex h-10 items-center">
        <button className="flex items-center gap-[5px] text-[#444]">幻灯片切换 <Caret className="text-[#888]" /></button>
        <button aria-label="关闭窗格" className="-mr-[8px] ml-auto"><Icon w={16} h={16} sw={1.2}><path d="m1 1 14 14M15 1 1 15" /></Icon></button>
      </div>
      <h2 className="flex h-[37px] items-center text-[21px] text-[#d0602c]">应用于所选幻灯片</h2>
      <div className="flex h-[215px] justify-between border border-[#dedede] bg-white pr-[3px] pt-[2px]">
        <svg width="0" height="0" className="absolute">
          <defs>
            <linearGradient id="orange" x1="0" y1="0" x2="1" y2="1"><stop stopColor="#f8aa78" /><stop offset="1" stopColor="#e88042" /></linearGradient>
            <linearGradient id="wipe"><stop offset=".3" stopColor="#fff0e6" /><stop offset="1" stopColor="#e88040" /></linearGradient>
          </defs>
        </svg>
        <div className="grid w-[336px] grid-cols-3 content-start">
          {effects.map((e) => (
            <button
              key={e.label}
              onClick={() => setSelected(e.label)}
              className={clsx('mx-[5px] mb-px flex h-[69px] flex-col items-center gap-2 pt-[3px] text-[#444]', e.label === selected && 'bg-[#bfbfbf]')}
            >
              <svg width="47" height="33" viewBox="0 0 47 33" className="shrink-0">{e.art}</svg>
              <span className="leading-5">{e.label}</span>
            </button>
          ))}
        </div>
        <div className="mt-1 h-[132px] w-[10px] bg-[#cfcfcf]" />
      </div>
      <h2 className="mt-2 flex h-8 items-center text-[21px] text-[#d0602c]">修改切换效果</h2>
      <div className="flex h-[51px] items-center">
        <label htmlFor="effect" className="w-[81px] whitespace-nowrap">效果选项:</label>
        <div className="relative flex h-full w-[185px] items-center border border-[#b8b8b8] bg-white">
          <svg width="44" height="32" viewBox="0 0 44 32" className="ml-4 shrink-0"><rect x=".5" y=".5" width="43" height="31" fill="#f8f8f8" stroke="#eee" /></svg>
          <select id="effect" disabled className="ml-5 flex-1 appearance-none bg-transparent text-[#bbb] opacity-100">
            <option>无切换</option>
          </select>
          <svg width="14" height="8" viewBox="0 0 14 8" className="absolute right-[3px] top-[19px]"><path d="M0 0h14L7 8z" fill="#aaa" /></svg>
        </div>
      </div>
      <div className="mr-[6px] mt-[11px] flex h-6 items-center">
        <label htmlFor="speed" className="w-[45px]">速度:</label>
        <div className="flex h-full min-w-0 flex-1 items-center border border-[#e0e0e0] bg-white pl-[2px]">
          <input id="speed" defaultValue="00.50" className="min-w-0 flex-1 outline-none" />
          <Spinner />
        </div>
      </div>
      <div className="mr-[6px] mt-[6px] flex h-6 items-center">
        <label htmlFor="sound" className="w-[45px]">声音:</label>
        <div className="relative flex h-full min-w-0 flex-1 items-center border border-[#e0e0e0] bg-white pl-[2px]">
          <select id="sound" className="flex-1 appearance-none bg-transparent text-[#444]">
            <option>[无声音]</option>
          </select>
          <Caret className="absolute right-[2px] top-2 text-[#888]" />
        </div>
      </div>
      <div className="mt-[107px] flex h-6 items-center">
        <label className="flex items-center gap-[6px]">
          <input type="checkbox" className="h-5 w-5 appearance-none border-2 border-[#aaa] bg-[#f4f4f4]" />
          每隔
        </label>
        <div className="ml-[7px] flex h-6 w-28 items-center border border-[#e0e0e0] bg-white pl-[2px]">
          <input aria-label="间隔时间" defaultValue="00:00" className="min-w-0 flex-1 outline-none" />
          <Spinner />
        </div>
      </div>
      <button className={clsx(paneButton, 'mt-[10px] w-[113px]')}>排练当前页</button>
      <button className={clsx(paneButton, 'mt-[21px] w-[178px]')}>应用于所有幻灯片</button>
      <div className="mt-[5px] flex gap-3">
        <button disabled className={clsx(paneButton, 'w-[85px] gap-[7px] text-[#aaa]!')}>
          <Icon w={16} h={16} sw={1.2}><circle cx="8" cy="8" r="7" /><path d="M6 5v6l5-3z" fill="currentColor" /></Icon>
          播放
        </button>
        <button className={clsx(paneButton, 'w-[140px] gap-[7px]')}>
          <Icon w={15} h={14} sw={1.2}>
            <path d="M0 1h14M2 1v8h4M5 12h5" />
            <circle cx="9" cy="6" r="3" stroke="#f06830" strokeWidth="2" />
          </Icon>
          幻灯片播放
        </button>
      </div>
      <label className="mt-[16px] flex items-center gap-[6px] pl-px">
        <span className="relative flex">
          <input type="checkbox" checked={preview} onChange={() => setPreview(!preview)} className="h-5 w-5 appearance-none border border-[#999] bg-white" />
          {preview && <Icon w={20} h={20} sw={2} className="pointer-events-none absolute inset-0 text-[#c87840]"><path d="m5 10 4 4 7-8" /></Icon>}
        </span>
        自动预览
      </label>
    </aside>
  );
};

// ---------- status bar ----------

const StatusBar = () => (
  <footer className="flex h-[38px] shrink-0 items-center border-t-2 border-[#e6e6e6] bg-[#f3f3f3] pb-[2px] pl-4 text-[18px] text-[#777]">
    <span>幻灯片 1 / 16</span>
    <span className="ml-9">Office 主题</span>
    <div className="ml-auto flex items-center pr-6 text-[#666]">
      <button aria-label="备注" className="flex items-center gap-1">
        <Icon w={22} h={20}><path d="M0 2h22M0 7h22M0 12h14M0 17h10" /><path d="M14 14h8l-4 4z" fill="currentColor" /></Icon>
        <Caret className="text-[#999]" />
      </button>
      <button aria-label="普通视图" className="ml-[8px] flex h-[31px] w-9 items-center justify-center rounded bg-[#bdbdbd]">
        <Icon w={24} h={22}><rect x="1" y="2" width="22" height="18" rx="1" /><path d="M6 2v18M6 15h17" /></Icon>
      </button>
      <button aria-label="幻灯片浏览" className="ml-[9px]">
        <Icon w={24} h={22}><rect x="1" y="2" width="9" height="7" rx="1" /><rect x="14" y="2" width="9" height="7" rx="1" /><rect x="1" y="13" width="9" height="7" rx="1" /><rect x="14" y="13" width="9" height="7" rx="1" /></Icon>
      </button>
      <button aria-label="阅读视图" className="ml-[15px]">
        <Icon w={24} h={22}><path d="M1 2h9l2 1.500L14 2h9v17h-9l-2 2-2-2H1zM12 3v17" /></Icon>
      </button>
      <button aria-label="放映" className="ml-5 flex h-[31px] w-12 items-center justify-center rounded bg-[#ff7450]">
        <svg width="14" height="16" viewBox="0 0 14 16"><path d="M1 0v16l13-8z" fill="#fff" /></svg>
      </button>
      <button className="ml-[20px] flex items-center gap-[9px] text-[#777]">57% <Caret className="text-[#999]" /></button>
      <button aria-label="缩小" className="ml-4"><Icon w={18} h={18} sw={3}><path d="M0 9h18" /></Icon></button>
      <input
        type="range"
        aria-label="缩放"
        defaultValue="25"
        className="ml-[17px] h-5 w-[207px] appearance-none bg-[linear-gradient(to_right,#777_26%,#c8c8c8_26%)] bg-[length:100%_2px] bg-center bg-no-repeat [&::-webkit-slider-thumb]:h-[18px] [&::-webkit-slider-thumb]:w-[18px] [&::-webkit-slider-thumb]:appearance-none [&::-webkit-slider-thumb]:rounded-full [&::-webkit-slider-thumb]:border-2 [&::-webkit-slider-thumb]:border-[#777] [&::-webkit-slider-thumb]:bg-white"
      />
      <button aria-label="放大" className="ml-4"><Icon w={18} h={18} sw={3}><path d="M0 9h18M9 0v18" /></Icon></button>
      <button aria-label="适应窗口" className="ml-[21px]"><Icon w={20} h={18}><path d="M1 5V1h5M14 1h5v4M19 13v4h-5M6 17H1v-4M9 9h2" /></Icon></button>
    </div>
  </footer>
);

// ---------- recorder window ----------

const recorderTabs = [
  { label: '菜单', cls: 'w-20 border-b bg-[#efece8] text-black' },
  { label: '屏幕录制', cls: 'w-[110px] bg-[#f1eeea] text-black' },
  { label: '游戏录制', cls: 'w-28 border-b bg-[#d9d7d4] text-[#666]' },
  { label: '音频录制', cls: 'w-[110px] border-b bg-[#d9d7d4] text-[#666]' },
];

const Recorder = () => (
  <section className='absolute right-0 top-[658px] flex h-[115px] w-[495px] flex-col overflow-hidden rounded-tl border-b-[5px] border-l-[5px] border-[#3f3f3f] bg-[#edeae5] font-["Noto_Sans","Noto_Sans_CJK_SC",sans-serif]'>
    <div className="flex h-[19px] shrink-0 items-center bg-linear-to-b from-[#5a5a58] to-[#3c3c3a]">
      <svg width="20" height="16" viewBox="0 0 20 16" className="shrink-0">
        <rect width="20" height="16" fill="#f4efec" />
        <circle cx="8" cy="9" r="4" fill="#e06030" />
        <path d="M16 3v9" stroke="#e08060" strokeWidth="2" />
      </svg>
      <span className='-ml-1 whitespace-nowrap font-["DejaVu_Sans"] text-[15px] font-bold leading-5 text-white'>oCam (0, 0, 2560, 1600)</span>
    </div>
    <div className="flex h-[30px] shrink-0 items-end">
      {recorderTabs.map((t) => (
        <button key={t.label} className={clsx('h-7 border-r border-[#c4c2bf] text-[18px] leading-6', t.cls)}>{t.label}</button>
      ))}
      <div className="h-px flex-1 bg-[#c4c2bf]" />
    </div>
    <div className="flex min-h-0 flex-1 bg-linear-to-b from-[#f1eeea] to-[#dedbd7] pl-[11px] pt-2 text-[18px] leading-6 text-[#111]">
      <button className="flex w-[105px] shrink-0 flex-col items-center">
        <svg width="36" height="31" viewBox="0 0 36 31">
          <ellipse cx="18" cy="15.500" rx="16.500" ry="14.500" fill="#e8e0e0" stroke="#a09898" />
          <ellipse cx="18" cy="15.500" rx="14.500" ry="12.500" fill="#e02020" />
          <path d="M5 16a13 11 0 0 1 26 0c-8-4-18-4-26 0z" fill="#f05858" />
          <rect x="10" y="9" width="16" height="14" rx="1" fill="#eee" stroke="#fff" />
        </svg>
        停止
      </button>
      <button className="flex w-[105px] shrink-0 flex-col items-center">
        <svg width="30" height="31" viewBox="0 0 30 31" fill="#e84038" stroke="#d09090">
          <rect x="1" y="1" width="11" height="29" rx="1" />
          <rect x="18" y="1" width="11" height="29" rx="1" />
        </svg>
        停止
      </button>
      <button className="flex w-[105px] shrink-0 flex-col items-center">
        <svg width="36" height="31" viewBox="0 0 36 31">
          <ellipse cx="18" cy="27" rx="12" ry="3.500" fill="#f4f4f4" stroke="#999" />
          <rect x="1" y="0.500" width="34" height="23" rx="2" fill="#eee" stroke="#999" />
          <rect x="4" y="3" width="28" height="18" fill="#1858c8" />
          <path d="M4 3h28v8c-10-3-18 4-28 2z" fill="#4888e8" />
        </svg>
        屏幕捕获
      </button>
      <div className="ml-2 shrink-0 whitespace-nowrap text-black">
        <p className="text-[38px] leading-[40px]">00:00:00</p>
        <p className="text-[22px] leading-7">0bytes / 367.49</p>
      </div>
    </div>
  </section>
);

// ---------- desktop + taskbar ----------

const Shortcut = () => (
  <svg width="17" height="17" viewBox="0 0 17 17" className="block">
    <rect width="17" height="17" fill="#f4f4f4" />
    <path d="M4 15C2 9 5 5 10 5V2l6 6-6 5v-4c-4 0-5 2-6 6z" fill="#1a4f9c" />
  </svg>
);

const DesktopEdge = () => (
  <div className="relative w-[30px] shrink-0 overflow-hidden bg-linear-to-b from-[#00a2f8] to-[#00aeff] text-[18px] leading-5 text-white">
    <div className="absolute left-5 top-[145px] h-[47px] w-4 bg-[#0078d7]" />
    <div className="absolute left-4 top-[192px]"><Shortcut /></div>
    <span className="absolute left-4 top-[213px]">M</span>
    <div className="absolute left-[26px] top-[474px] h-px w-4 bg-white/80" />
    <div className="absolute left-[26px] top-[580px] h-9 w-6 border border-white/70 bg-[#3090d8]" />
    <span className="absolute left-5 top-[635px]">控</span>
    <div className="absolute left-5 top-[755px]"><Shortcut /></div>
    <span className="absolute left-[18px] top-[774px]">W</span>
    <div className="absolute left-5 top-[895px]"><Shortcut /></div>
    <span className="absolute left-[18px] top-[914px]">W</span>
  </div>
);

const tray = [
  { label: '显示隐藏的图标', art: <path d="m3 16 9-9 9 9" /> },
  { label: '麦克风', art: <><rect x="8" y="1" width="8" height="15" rx="3" fill="currentColor" /><path d="M5 12c0 9 14 9 14 0M12 19v3M8 22h8" /></> },
  { label: '电池', art: <><path d="M1 7h19v11H1zM20 10h2v5h-2" /><path d="M4 10h11v5H4z" fill="currentColor" /></> },
  { label: '网络', art: <><circle cx="11" cy="12" r="10" /><path d="M1 12h20M11 2c-6 6-6 14 0 20M11 2c4 3 5 7 5 10M3 7h16M3 17h9" /><circle cx="18" cy="18" r="4.500" fill="#1d2b40" /><path d="m15 15 6 6" /></> },
  { label: '音量', art: <path d="M1 9h4l5-5v16l-5-5H1zM13 9c2 2 2 4 0 6M16 6c4 4 4 8 0 12M19 3c5 6 5 12 0 18" /> },
];

const Taskbar = () => (
  <footer className="flex h-[54px] shrink-0 bg-linear-to-r from-[#22363f] via-[#20323f] to-[#17233c] text-white">
    <button aria-label="开始" className="flex w-[72px] items-center justify-center">
      <svg width="24" height="22" viewBox="0 0 24 22" fill="#fff">
        <path d="M0 3l10-1.500V10.500H0zM11 1.300 24 0v10.500H11zM0 11.500h10v9L0 19zM11 11.500h13V22l-13-1.300z" />
      </svg>
    </button>
    <label className="flex w-[516px] items-center border-b-2 border-[#bbb] bg-[#f1f1f1] pl-[18px] pt-[2px] text-[#222]">
      <Icon w={24} h={24} sw={1.8}><circle cx="15" cy="9" r="7.500" /><path d="m10 15-9 8" /></Icon>
      <input aria-label="搜索" placeholder="在这里输入你要搜索的内容" className="ml-[18px] flex-1 bg-transparent text-[24px] outline-none placeholder:text-[#333]" />
    </label>
    <button aria-label="Cortana" className="flex w-[72px] items-center justify-center"><Icon sw={3}><circle cx="12" cy="12" r="9.500" /></Icon></button>
    <button aria-label="任务视图" className="flex w-[74px] items-center justify-center">
      <Icon sw={1.8}><path d="M2 2v3h13V2M2 8h13v8H2zM2 22v-3h13v3M20 2v3M20 12v10" /><circle cx="20" cy="8" r="1.500" fill="currentColor" /></Icon>
    </button>
    <button aria-label="Edge" className="flex w-[76px] items-center justify-center">
      <svg width="30" height="30" viewBox="0 0 30 30"><path d="M1 14C3 4 9 1 16 1c9 0 13 7 13 13v3H10c0 7 9 9 17 5v6c-9 4-22 1-22-10 0-5 3-8 6-10-6 1-8 3-10 6zm9-2h11c0-6-9-7-11 0z" fill="#1180d8" /></svg>
    </button>
    <button aria-label="文件资源管理器" className="flex w-[74px] items-center justify-center">
      <svg width="32" height="26" viewBox="0 0 32 26"><path d="M0 1h13l2 3h17v21H0z" fill="#ffd75e" /><path d="M0 1h13l1 3H0z" fill="#e0a010" /><path d="M5 25V13h22v12h-6v-6H11v6z" fill="#3c90d8" /></svg>
    </button>
    <button className="flex w-60 items-center border-b-[3px] border-[#76b5ea] bg-[#4b5a64] pl-4 pt-[2px] text-[18px]">
      <svg width="33" height="25" viewBox="0 0 33 25"><rect width="33" height="25" rx="2" fill="#efefef" /><circle cx="11" cy="15" r="7" fill="#d8d8d8" /><circle cx="11" cy="15" r="4" fill="#e86428" /><circle cx="18" cy="6" r="2" fill="#e86428" /><path d="M27 7v14" stroke="#e86428" strokeWidth="4" /></svg>
      <span className="ml-1">ocam</span>
    </button>
    <button className="ml-[7px] flex w-[228px] items-center border-b-[3px] border-[#76b5ea] pl-[13px] pt-[2px] text-[18px]">
      <WpsLogo w={27} h={27} />
      <span className="ml-2">2.21农业可持续发...</span>
    </button>
    <div className="ml-auto flex items-center">
      {tray.map((t) => (
        <button key={t.label} aria-label={t.label} className="flex w-9 justify-center"><Icon>{t.art}</Icon></button>
      ))}
      <button className="w-9 text-[22px]">中</button>
      <button className="flex w-[50px] justify-center"><span className="h-6 w-[23px] bg-white text-center text-[20px] leading-6 text-black">拼</span></button>
      <div className="w-[116px] text-center text-[18px] leading-[25px]">
        <p>23:23</p>
        <p>2020/2/20</p>
      </div>
      <button aria-label="通知" className="flex w-[54px] justify-center">
        <svg width="26" height="24" viewBox="0 0 26 24"><path d="M1 1h23v16h-9l-7 6v-6H1z" fill="#fff" /><path d="M5 5h15M5 9h15M5 13h9" stroke="#1b2840" strokeWidth="1.500" /><path d="M14 19c4 0 5-3 4-6M15 22c6 0 8-5 7-9" stroke="#1b2840" strokeWidth="1.500" fill="none" /></svg>
      </button>
      <div className="ml-[15px] h-[54px] w-[7px] border-l border-[#66728a]" />
    </div>
  </footer>
);

export default function App() {
  return (
    <div className='relative flex h-screen w-full flex-col overflow-hidden bg-[#0442bb] font-["Noto_Sans","Noto_Sans_CJK_SC",sans-serif]'>
      <div className="flex min-h-0 flex-1">
        <DesktopEdge />
        <div className="flex min-w-0 flex-1 flex-col">
          <TitleBar />
          <Ribbon />
          <div className="flex min-h-0 flex-1">
            <SlidePanel />
            <Editor />
            <ToolStrip />
            <TransitionPane />
          </div>
          <StatusBar />
        </div>
        <div className="w-[30px] shrink-0 bg-linear-to-r from-[#0338a4] to-[#0442bb]" />
      </div>
      <Taskbar />
      <Recorder />
      {/* mouse pointer */}
      <svg width="20" height="27" viewBox="0 0 20 27" className="absolute left-[180px] top-0">
        <path d="M1 0v22l5-4 4 8 4-2-4-8h8z" fill="#fff" stroke="#222" strokeWidth="1.200" />
      </svg>
    </div>
  );
}
